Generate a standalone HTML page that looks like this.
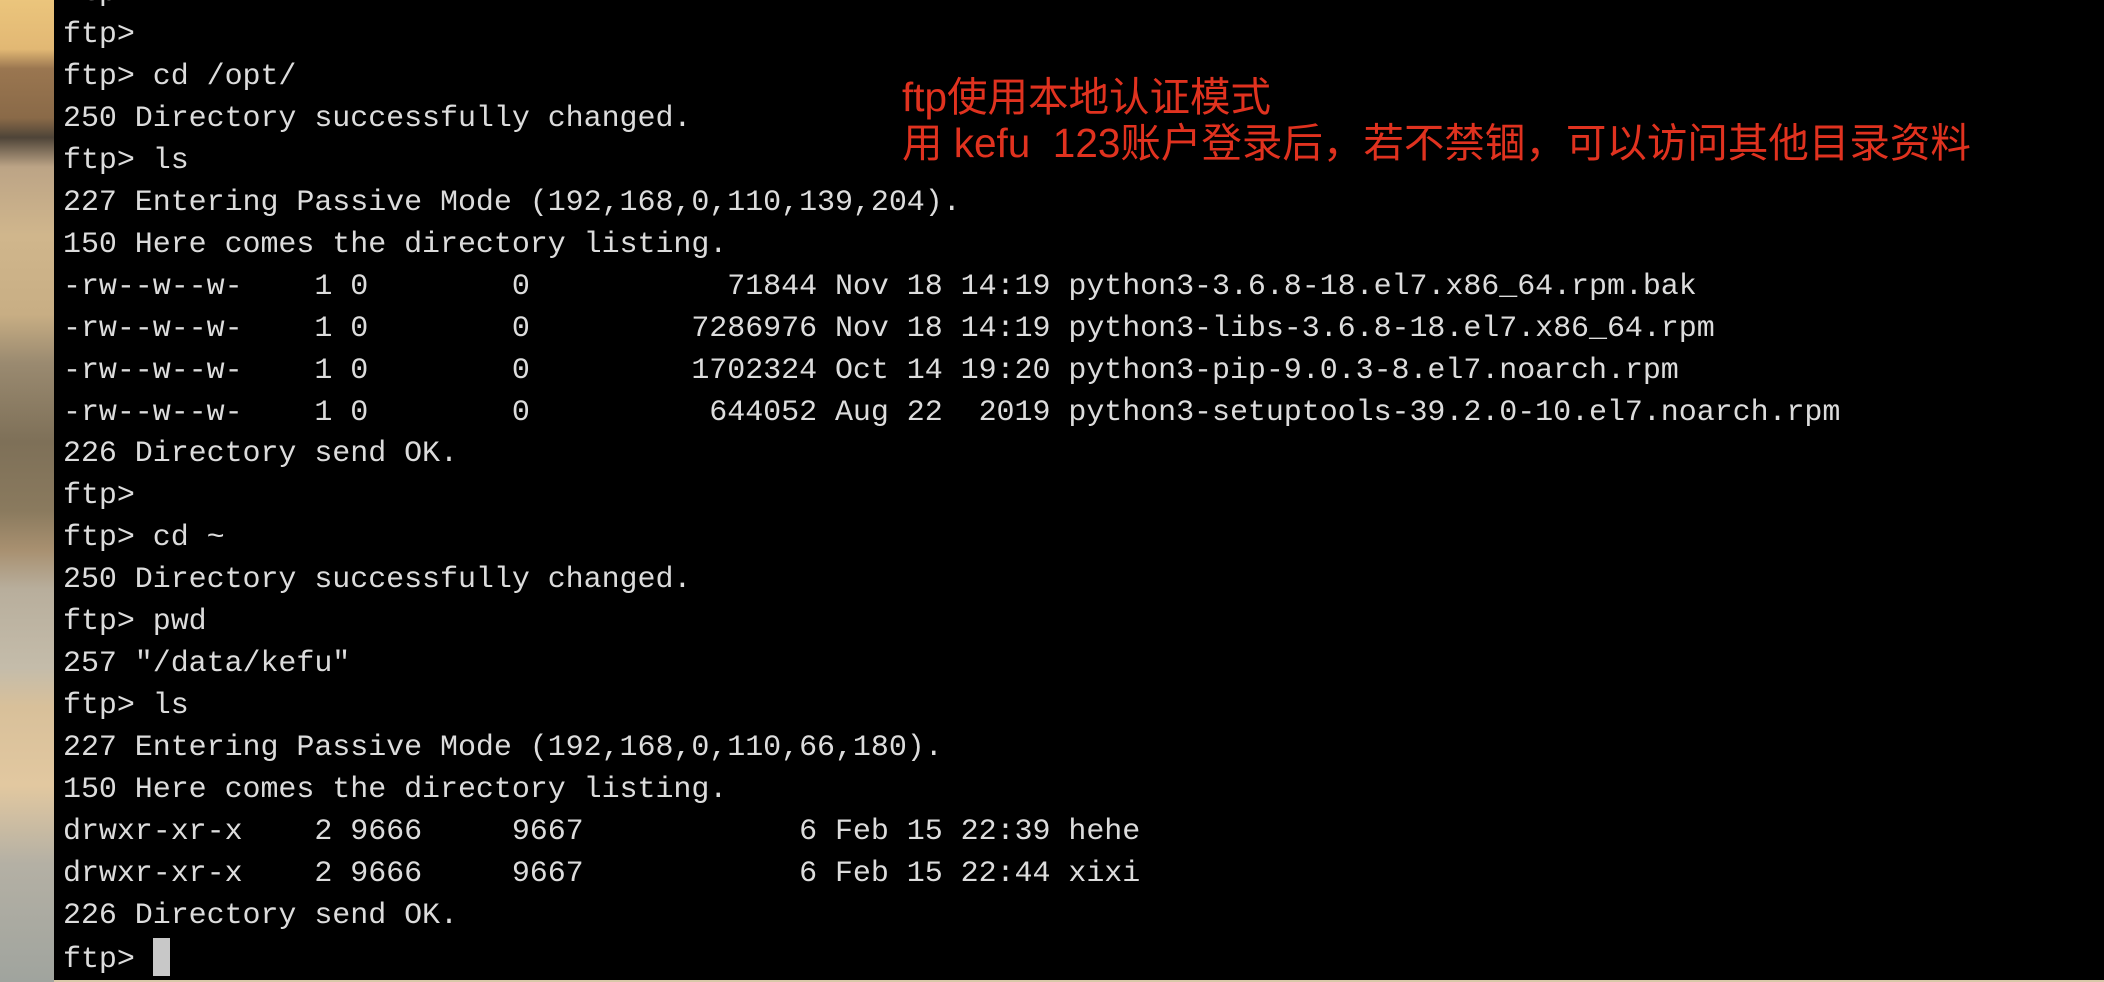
<!DOCTYPE html>
<html><head><meta charset="utf-8"><style>
html,body{margin:0;padding:0;width:2104px;height:982px;overflow:hidden;background:#d8c8a8;}
.strip{position:absolute;left:0;top:0;width:54px;height:982px;background:linear-gradient(180deg,#ebc57c 0%,#e2b874 5%,#9a7650 7%,#8a6a48 12%,#4e4438 14%,#bca486 17%,#d0b68c 24%,#c8ae84 32%,#9a8a70 37%,#7e7058 45%,#8a7a5e 52%,#a89070 56%,#b8ae9c 60%,#c4bcaa 68%,#d8c09a 72%,#e2c8a0 80%,#b4b0a4 88%,#a0a49e 100%);}
.term{position:absolute;left:54px;top:0;width:2050px;height:980px;background:#000;}
pre{position:absolute;left:9px;top:-27px;margin:0;font-family:"Liberation Mono",monospace;font-size:30px;line-height:41.95px;color:#dcdcdc;letter-spacing:-0.05px;}
.cur{display:inline-block;width:17px;height:38px;background:#c8c8c8;vertical-align:-9px;}
.note{position:absolute;left:902px;top:74px;font-family:"Liberation Sans","Noto Sans CJK SC",sans-serif;font-size:40.5px;line-height:46px;color:#e0321f;white-space:pre;}
</style></head><body>
<div class="strip"></div>
<div class="term">
<pre>ftp&gt;
ftp&gt;
ftp&gt; cd /opt/
250 Directory successfully changed.
ftp&gt; ls
227 Entering Passive Mode (192,168,0,110,139,204).
150 Here comes the directory listing.
-rw--w--w-    1 0        0           71844 Nov 18 14:19 python3-3.6.8-18.el7.x86_64.rpm.bak
-rw--w--w-    1 0        0         7286976 Nov 18 14:19 python3-libs-3.6.8-18.el7.x86_64.rpm
-rw--w--w-    1 0        0         1702324 Oct 14 19:20 python3-pip-9.0.3-8.el7.noarch.rpm
-rw--w--w-    1 0        0          644052 Aug 22  2019 python3-setuptools-39.2.0-10.el7.noarch.rpm
226 Directory send OK.
ftp&gt;
ftp&gt; cd ~
250 Directory successfully changed.
ftp&gt; pwd
257 "/data/kefu"
ftp&gt; ls
227 Entering Passive Mode (192,168,0,110,66,180).
150 Here comes the directory listing.
drwxr-xr-x    2 9666     9667            6 Feb 15 22:39 hehe
drwxr-xr-x    2 9666     9667            6 Feb 15 22:44 xixi
226 Directory send OK.
ftp&gt; <span class="cur"></span></pre>
</div>
<div class="note">ftp使用本地认证模式
用 kefu  123账户登录后，若不禁锢，可以访问其他目录资料</div>
</body></html>
